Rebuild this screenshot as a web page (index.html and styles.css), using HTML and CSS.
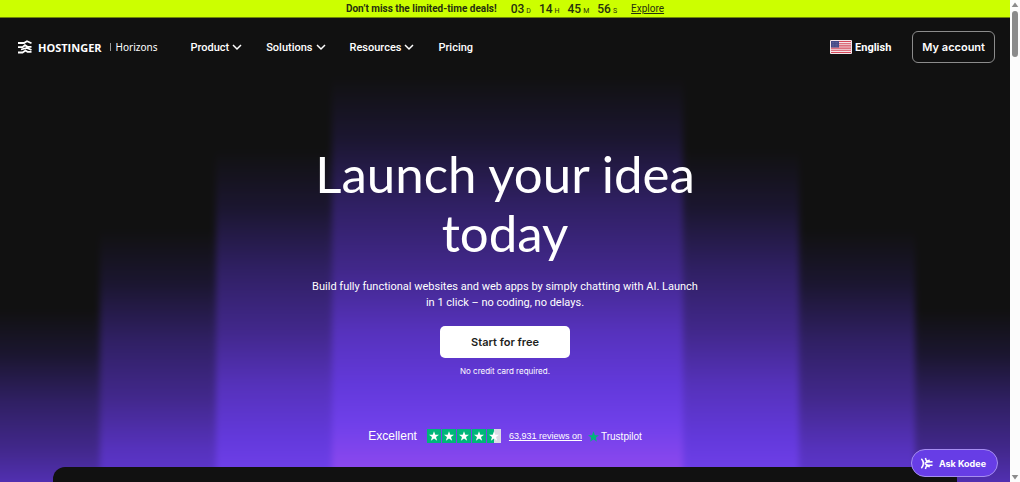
FILE: index.html
```html
<!DOCTYPE html>
<html lang="en">
<head>
<meta charset="utf-8">
<meta name="viewport" content="width=device-width, initial-scale=1">
<title>Hostinger Horizons</title>
<link rel="stylesheet" href="styles.css">
</head>
<body>
<svg class="defs" aria-hidden="true">
  <symbol id="chevron" viewBox="0 0 10 10"><path d="M1 3 5 7l4-4" fill="none" stroke="currentColor" stroke-width="1.500"/></symbol>
  <symbol id="star" viewBox="2 2 20 19"><path d="M12 2l2.600 7H22l-6 4.600 2.300 7.400-6.300-4.500L5.700 21 8 13.600 2 9h7.400z" fill="currentColor"/></symbol>
</svg>
<div class="page">
  <div class="backdrop" aria-hidden="true">
    <div class="band band-4"></div>
    <div class="band band-3"></div>
    <div class="band band-2"></div>
    <div class="band band-1"></div>
    <div class="band band-2"></div>
    <div class="band band-3"></div>
    <div class="band band-4"></div>
  </div>

  <div class="promo">
    <strong class="promo-title">Don’t miss the limited-time deals!</strong>
    <div class="timer">
      <span class="unit"><b>03</b><small>D</small></span>
      <span class="unit"><b>14</b><small>H</small></span>
      <span class="unit"><b>45</b><small>M</small></span>
      <span class="unit"><b>56</b><small>S</small></span>
    </div>
    <a class="promo-link" href="#">Explore</a>
  </div>

  <header class="header">
    <a class="logo" href="#">
      <svg class="logo-mark" viewBox="0 0 14 14" aria-hidden="true"><path d="M0 3h6L9 1.300l4.500 2M0 7.200h4.500L7 5.200l2.500 1.600h4M0 12.500h4.500L7.500 10.500l2 1.300h4M3 9.500 9 8l4.500 2" fill="none" stroke="currentColor" stroke-width="1.800"/></svg>
      <span class="logo-name">HOSTINGER</span>
      <span class="logo-rule"></span>
      <span class="logo-product">Horizons</span>
    </a>
    <nav class="nav">
      <button class="nav-item" type="button">Product <svg class="chevron" aria-hidden="true"><use href="#chevron"/></svg></button>
      <button class="nav-item" type="button">Solutions <svg class="chevron" aria-hidden="true"><use href="#chevron"/></svg></button>
      <button class="nav-item" type="button">Resources <svg class="chevron" aria-hidden="true"><use href="#chevron"/></svg></button>
      <a class="nav-item" href="#">Pricing</a>
    </nav>
    <button class="language" type="button">
      <svg class="flag" viewBox="0 0 22 14" aria-hidden="true">
        <rect width="22" height="14" rx="1" fill="#f3e4e8"/>
        <path d="M1 1.500h20M1 3.700h20M1 5.900h20M1 8.100h20M1 10.300h20M1 12.500h20" stroke="#d5485a" stroke-width="1.100"/>
        <rect x="1" y="1" width="8" height="6.500" fill="#454a86"/>
        <path d="M2 2.500h6M2 4.300h6M2 6h6" stroke="#9093b8" stroke-width=".5" stroke-dasharray=".6 .8"/>
      </svg>
      English
    </button>
    <a class="account" href="#">My account</a>
  </header>

  <main class="hero">
    <h1 class="title">Launch your idea today</h1>
    <p class="lead">Build fully functional websites and web apps by simply chatting with AI. Launch in 1 click – no coding, no delays.</p>
    <a class="start" href="#">Start for free</a>
    <p class="note">No credit card required.</p>
    <div class="rating">
      <span class="rating-word">Excellent</span>
      <span class="stars" role="img" aria-label="4.5 out of 5 stars">
        <svg class="star"><use href="#star"/></svg>
        <svg class="star"><use href="#star"/></svg>
        <svg class="star"><use href="#star"/></svg>
        <svg class="star"><use href="#star"/></svg>
        <svg class="star star-half"><use href="#star"/></svg>
      </span>
      <a class="reviews" href="#">63,931 reviews on</a>
      <span class="trustpilot"><svg class="tp-star" aria-hidden="true"><use href="#star"/></svg>Trustpilot</span>
    </div>
  </main>

  <section class="showcase"></section>

  <button class="kodee" type="button">
    <svg class="kodee-mark" viewBox="0 0 14 14" aria-hidden="true"><path d="M1.500 2Q6 7 1.500 12M5.800 1 7 4.500l3.500-1M5.800 13 7 9.500l3.500 1M5 7l3-1.500 5.500-.3M5 7l3 1.500 5.500.3" fill="none" stroke="currentColor" stroke-width="1.600"/></svg>
    Ask Kodee
  </button>
</div>
<div class="scrollbar" aria-hidden="true">
  <svg class="arrow" viewBox="0 0 10 10"><path d="M5 2.500 8.300 7H1.700z"/></svg>
  <div class="thumb"></div>
  <svg class="arrow arrow-end" viewBox="0 0 10 10"><path d="M5 7.500 1.700 3h6.600z"/></svg>
</div>
</body>
</html>
```

FILE: styles.css
```css
* { box-sizing: border-box; }

body {
  margin: 0;
  height: 100vh;
  display: flex;
  overflow: hidden;
  background: #111;
  color: #fff;
  font-family: "Inter", "Liberation Sans", sans-serif;
  font-size: 11px;
}

a { color: inherit; text-decoration: none; }
button { padding: 0; border: 0; background: none; color: inherit; font: inherit; cursor: pointer; }
h1, p { margin: 0; }
.defs { display: none; }

.page {
  position: relative;
  flex: 1;
  min-width: 0;
  display: flex;
  flex-direction: column;
  overflow: hidden;
  isolation: isolate;
}

/* Stepped light columns behind the hero */
.backdrop {
  position: absolute;
  inset: 0;
  z-index: -1;
  display: grid;
  grid-template-columns: 20fr 23fr 23fr 70fr 23fr 23fr 19fr;
  filter: blur(3px);
}
.band {
  margin-bottom: -20px;
  background: linear-gradient(
    #111 var(--start),
    #1b1630 calc(var(--start) + var(--length) * 0.16),
    #302064 calc(var(--start) + var(--length) * 0.33),
    #42288c calc(var(--start) + var(--length) * 0.5),
    #5632bc calc(var(--start) + var(--length) * 0.65),
    #6339db calc(var(--start) + var(--length) * 0.79),
    #7040ea calc(var(--start) + var(--length) * 0.89),
    #8c48ee calc(var(--start) + var(--length))
  );
}
.band-1 { --start: 76px; --length: 392px; }
.band-2 { --start: 150px; --length: 364px; }
.band-3 { --start: 230px; --length: 336px; }
.band-4 { --start: 310px; --length: 280px; }
.band:first-child { margin-left: -20px; }
.band:last-child { margin-right: -20px; }

.promo {
  height: 18px;
  flex: none;
  display: flex;
  align-items: center;
  justify-content: center;
  background: #cf0;
  border-bottom: 1px solid #6f8709;
  color: #26300f;
  font-family: "Roboto", sans-serif;
  font-size: 10px;
}
.promo-title { font-weight: 700; }
.timer { display: flex; gap: 8px; margin: 0 14px; }
.unit { display: flex; align-items: baseline; gap: 2px; }
.unit b { font-size: 12px; font-weight: 500; }
.unit small { font-size: 7px; }
.promo-link { text-decoration: underline; }

.header {
  height: 58px;
  flex: none;
  display: flex;
  align-items: center;
  padding: 0 15px 0 18px;
}
.logo { display: flex; align-items: center; font-family: "Open Sans", sans-serif; }
.logo-mark { width: 14px; height: 14px; margin-right: 6px; }
.logo-name { font-weight: 700; }
.logo-rule { width: 1px; height: 8px; margin: 0 5px 0 8px; background: #999; }
.logo-product { font-family: "Noto Sans", sans-serif; font-size: 10px; }
.nav { display: flex; align-items: center; gap: 24px; margin-left: 33px; font-family: "Roboto", sans-serif; }
.nav-item { display: flex; align-items: center; gap: 3px; font-weight: 500; }
.chevron { width: 10px; height: 10px; }
.language { display: flex; align-items: center; gap: 3px; margin-left: auto; font-family: "Roboto", sans-serif; font-weight: 700; }
.flag { width: 22px; height: 14px; }
.account {
  height: 32px;
  padding: 0 9px;
  margin-left: 21px;
  display: flex;
  align-items: center;
  border: 1px solid #8c8c8c;
  border-radius: 6px;
  font-weight: 600;
}

.hero { display: flex; flex-direction: column; align-items: center; padding-top: 68px; text-align: center; }
.title { max-width: 440px; font-family: "Lato", sans-serif; font-size: 51px; font-weight: 400; line-height: 59px; }
.lead { max-width: 396px; margin-top: 17px; font-family: "Roboto", sans-serif; line-height: 16px; }
.start {
  width: 130px;
  height: 32px;
  margin-top: 15px;
  display: flex;
  align-items: center;
  justify-content: center;
  border-radius: 5px;
  background: #fff;
  color: #1d1e20;
  font-weight: 600;
}
.note { margin-top: 7px; font-size: 8px; line-height: 12px; }
.rating { height: 20px; margin-top: 49px; display: flex; align-items: center; font-family: "Liberation Sans", sans-serif; font-size: 10px; }
.rating-word { font-size: 12px; }
.stars { display: flex; gap: 1px; margin: 0 8px 0 10px; }
.star { width: 14px; height: 14px; padding: 2px; background: #00b67a; }
.star-half { background: linear-gradient(90deg, #00b67a 50%, #dcdce6 50%); }
.reviews { font-size: 9px; text-decoration: underline; }
.trustpilot { display: flex; align-items: center; gap: 2px; margin-left: 6px; }
.tp-star { width: 11px; height: 11px; color: #00b67a; }

.showcase { flex: 1; margin: 21px 53px 0; border-radius: 12px 12px 0 0; background: #111; }

.kodee {
  position: absolute;
  right: 12px;
  bottom: 5px;
  height: 28px;
  padding: 0 11px 0 8px;
  display: flex;
  align-items: center;
  gap: 6px;
  border: 1px solid #a68ef0;
  border-radius: 14px;
  background: #673de6;
  font-size: 9px;
  font-weight: 700;
}
.kodee-mark { width: 13px; height: 13px; }

.scrollbar { width: 10px; flex: none; display: flex; flex-direction: column; align-items: center; background: #fcfcfc; }
.arrow { width: 10px; height: 10px; fill: #8b8b8b; }
.arrow-end { margin-top: auto; }
.thumb { width: 6px; height: 46px; margin-top: 1px; border-radius: 3px; background: #8b8b8b; }
```
